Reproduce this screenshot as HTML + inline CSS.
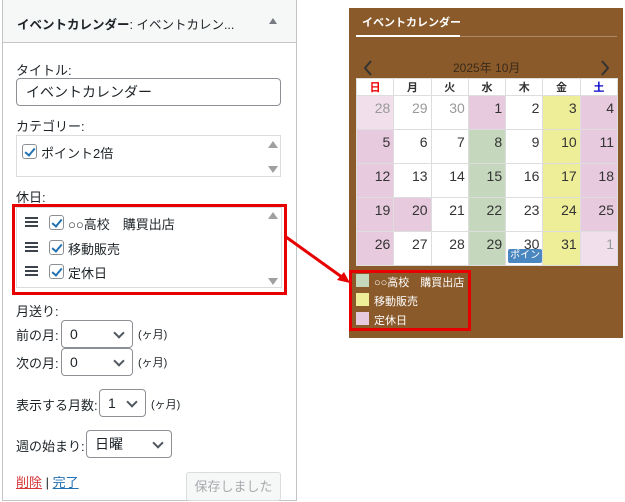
<!DOCTYPE html><html><head><meta charset="utf-8"><style>
*{box-sizing:border-box;margin:0;padding:0}
body{width:625px;height:502px;background:#fff;position:relative;overflow:hidden;font-family:"Liberation Sans","Noto Sans CJK JP",sans-serif;font-size:13px;color:#1d2327}
.a{position:absolute;white-space:nowrap}
.panel{left:2px;top:0;width:295px;height:501px;border:1px solid #c3c4c7;border-top:none}
.hd{left:3px;top:0;width:293px;height:43px;background:#f6f7f7;border-bottom:1px solid #c3c4c7}
.inp{border:1px solid #8c8f94;border-radius:4px;background:#fff}
.box{border:1px solid #dcdcde;background:#fff}
.cb{width:15px;height:15px;border:1px solid #8c8f94;border-radius:3px;background:#fff}
.cb:after{content:"";position:absolute;left:4px;top:1px;width:4px;height:8px;border:solid #2271b1;border-width:0 2px 2px 0;transform:rotate(40deg)}
.hb{width:13px;height:10px;border-top:2px solid #3c434a;border-bottom:2px solid #3c434a}
.hb:after{content:"";position:absolute;left:0;top:2px;width:13px;height:2px;background:#3c434a}
.sel{border:1px solid #8c8f94;border-radius:4px;background:#fff;padding-left:8px;line-height:26px;font-size:14px}
.sel:after{content:"";position:absolute;right:9px;top:8px;width:6px;height:6px;border:solid #50575e;border-width:0 2px 2px 0;transform:rotate(45deg)}
.up{width:0;height:0;border-left:5px solid transparent;border-right:5px solid transparent;border-bottom:7px solid #a0a0a0}
.dn{width:0;height:0;border-left:5px solid transparent;border-right:5px solid transparent;border-top:7px solid #a0a0a0}
.cal{left:349px;top:8px;width:274px;height:330px;background:#8a5a2b}
table{position:absolute;left:356px;top:78px;border-collapse:collapse;table-layout:fixed;width:262px}
td{border:1px solid #ddd;width:37.4px;height:34px;text-align:right;vertical-align:top;padding:4px 3px 0 0;font-size:14px;color:#333;background:#fff}
th{border:1px solid #ddd;height:17px;font-size:11px;background:#fff;color:#333;font-weight:bold}
.p{background:#e8cadf}.lp{background:#f1e0ec;color:#999}.g{background:#c5d7bc}.y{background:#eeee99}.o{color:#999}
.lg{font-size:11px;color:#fff}
.sw{width:13px;height:13px}
</style></head><body>
<div class="a panel"></div>
<div class="a hd"></div>
<div class="a" style="left:17px;top:14px;font-size:12.5px"><b>イベントカレンダー</b>: イベントカレン...</div>
<div class="a up" style="left:269px;top:18px;border-bottom-color:#787c82;border-left-width:4px;border-right-width:4px;border-bottom-width:6px"></div>
<div class="a" style="left:16px;top:60px">タイトル:</div>
<div class="a inp" style="left:16px;top:78px;width:265px;height:28px;padding-left:9px;line-height:26px;font-size:14px">イベントカレンダー</div>
<div class="a" style="left:16px;top:116px">カテゴリー:</div>
<div class="a box" style="left:16px;top:135px;width:265px;height:42px"></div>
<div class="a cb" style="left:22px;top:144px"></div>
<div class="a" style="left:41px;top:143px">ポイント2倍</div>
<div class="a up" style="left:268px;top:141px"></div><div class="a dn" style="left:268px;top:166px"></div>
<div class="a" style="left:16px;top:187px">休日:</div>
<div class="a box" style="left:16px;top:207px;width:266px;height:81px"></div>
<div class="a" style="left:12px;top:204px;width:275px;height:91px;border:3px solid #e60000"></div>
<div class="a hb" style="left:25px;top:217px"></div><div class="a cb" style="left:49px;top:215px"></div><div class="a" style="left:68px;top:214px">○○高校　購買出店</div>
<div class="a hb" style="left:25px;top:242px"></div><div class="a cb" style="left:49px;top:240px"></div><div class="a" style="left:68px;top:239px">移動販売</div>
<div class="a hb" style="left:25px;top:266px"></div><div class="a cb" style="left:49px;top:264px"></div><div class="a" style="left:68px;top:263px">定休日</div>
<div class="a up" style="left:268px;top:212px"></div><div class="a dn" style="left:268px;top:278px"></div>
<div class="a" style="left:16px;top:301px">月送り:</div>
<div class="a" style="left:16px;top:325px">前の月:</div><div class="a sel" style="left:61px;top:320px;width:72px;height:28px">0</div><div class="a" style="left:138px;top:326px;font-size:11px">(ヶ月)</div>
<div class="a" style="left:16px;top:353px">次の月:</div><div class="a sel" style="left:61px;top:348px;width:72px;height:28px">0</div><div class="a" style="left:138px;top:354px;font-size:11px">(ヶ月)</div>
<div class="a" style="left:16px;top:395px">表示する月数:</div><div class="a sel" style="left:99px;top:389px;width:47px;height:28px">1</div><div class="a" style="left:151px;top:396px;font-size:11px">(ヶ月)</div>
<div class="a" style="left:16px;top:436px">週の始まり:</div><div class="a sel" style="left:86px;top:430px;width:86px;height:28px">日曜</div>
<div class="a" style="left:16px;top:472px"><span style="color:#d63638;text-decoration:underline">削除</span> | <span style="color:#2271b1;text-decoration:underline">完了</span></div>
<div class="a" style="left:186px;top:472px;width:95px;height:29px;border:1px solid #dcdcde;border-radius:3px;background:#f6f7f7;color:#a7aaad;text-align:center;line-height:27px">保存しました</div>
<svg class="a" style="left:284px;top:232px" width="70" height="56"><line x1="2" y1="5" x2="62" y2="48" stroke="#e60000" stroke-width="3"/><polygon points="66,51 53,48 60,40" fill="#e60000"/></svg>
<div class="a cal"></div>
<div class="a" style="left:362px;top:14px;color:#fff;font-size:11px;font-weight:bold">イベントカレンダー</div>
<div class="a" style="left:356px;top:36px;width:261px;height:1px;background:#b08a66"></div>
<div class="a" style="left:356px;top:35px;width:104px;height:2px;background:#fff"></div>
<div class="a" style="left:453px;top:59px;color:#3a2a1a;font-size:12px">2025年 10月</div>
<svg class="a" style="left:362px;top:60px" width="12" height="16"><path d="M9 1 L3 8 L9 15" fill="none" stroke="#333" stroke-width="2"/></svg>
<svg class="a" style="left:599px;top:60px" width="12" height="16"><path d="M3 1 L9 8 L3 15" fill="none" stroke="#333" stroke-width="2"/></svg>
<table>
<tr><th style="color:#e00">日</th><th>月</th><th>火</th><th>水</th><th>木</th><th>金</th><th style="color:#00c">土</th></tr>
<tr><td class="lp">28</td><td class="o">29</td><td class="o">30</td><td class="p">1</td><td>2</td><td class="y">3</td><td class="p">4</td></tr>
<tr><td class="p">5</td><td>6</td><td>7</td><td class="g">8</td><td>9</td><td class="y">10</td><td class="p">11</td></tr>
<tr><td class="p">12</td><td>13</td><td>14</td><td class="g">15</td><td>16</td><td class="y">17</td><td class="p">18</td></tr>
<tr><td class="p">19</td><td class="p">20</td><td>21</td><td class="g">22</td><td>23</td><td class="y">24</td><td class="p">25</td></tr>
<tr><td class="p">26</td><td>27</td><td>28</td><td class="g">29</td><td style="position:relative">30<div style="position:absolute;left:2px;top:17px;width:34px;height:14px;background:#4a87c0;border-radius:2px;color:#fff;font-size:10px;text-align:left;overflow:hidden;padding-left:2px;line-height:14px">ポイント</div></td><td class="y">31</td><td class="lp">1</td></tr>
</table>
<div class="a" style="left:349px;top:270px;width:122px;height:61px;border:3px solid #e60000"></div>
<div class="a sw g" style="left:356px;top:274px;background:#c5d7bc"></div><div class="a lg" style="left:374px;top:274px">○○高校　購買出店</div>
<div class="a sw" style="left:356px;top:293px;background:#eeee99"></div><div class="a lg" style="left:374px;top:293px">移動販売</div>
<div class="a sw" style="left:356px;top:312px;background:#e8cadf"></div><div class="a lg" style="left:374px;top:312px">定休日</div>
</body></html>
